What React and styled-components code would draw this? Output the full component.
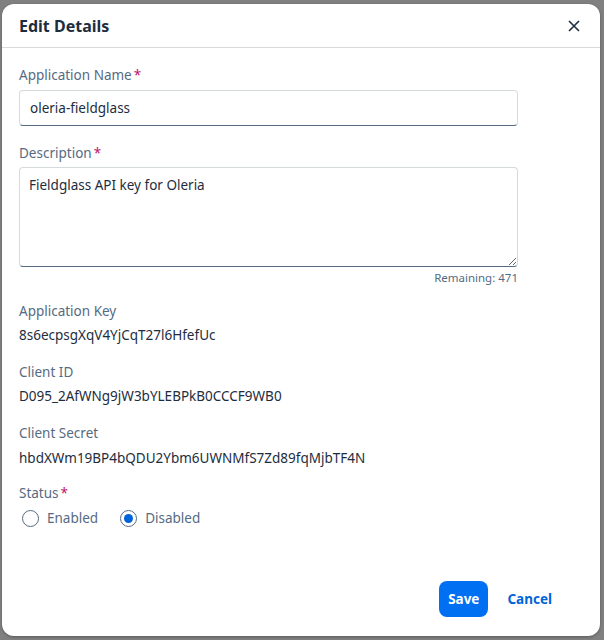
import styled, { createGlobalStyle } from "styled-components";
import { useState } from "react";

const Global = createGlobalStyle`
  html, body {
    margin: 0;
    padding: 0;
    background: #808080;
  }
  body {
    font-family: "Noto Sans", "Open Sans", Arial, sans-serif;
    padding: 4px 4px 4px 2px;
  }
  * { box-sizing: border-box; }
`;

const Dialog = styled.div`
  width: 598px;
  height: 632px;
  background: #fff;
  border-radius: 12px;
  display: flex;
  flex-direction: column;
  box-shadow: 0 1px 3px rgba(0, 0, 0, 0.3);
`;

const Header = styled.div`
  height: 44px;
  display: flex;
  align-items: center;
  justify-content: space-between;
  padding: 0 16px 0 17px;
  border-bottom: 1px solid #d9d9d9;
`;

const Title = styled.h1`
  margin: 0;
  font-size: 16px;
  font-weight: 700;
  color: #1d2d3e;
`;

const CloseButton = styled.button`
  border: none;
  background: none;
  padding: 0;
  width: 20px;
  height: 20px;
  display: flex;
  align-items: center;
  justify-content: center;
  cursor: pointer;
`;

const Body = styled.div`
  flex: 1;
  padding: 18px 17px 0;
  display: flex;
  flex-direction: column;
`;

const Label = styled.label`
  display: block;
  font-size: 13.5px;
  line-height: 18px;
  color: #556b82;
  margin-top: ${(p) => p.$top || 0}px;
`;

const Star = styled.span`
  color: #c0116d;
  margin-left: 2px;
`;

const Input = styled.input`
  display: block;
  width: 499px;
  height: 36px;
  margin-top: 6px;
  padding: 0 10px;
  font: inherit;
  font-size: 13.5px;
  color: #1d2d3e;
  border: 1px solid #d5dadd;
  border-bottom-color: #556b82;
  border-radius: 4px;
  outline: none;
`;

const TextArea = styled.textarea`
  display: block;
  width: 499px;
  height: 100px;
  margin-top: 5px;
  padding: 8px 9px;
  font: inherit;
  font-size: 13.5px;
  line-height: 18px;
  color: #1d2d3e;
  border: 1px solid #d5dadd;
  border-bottom-color: #556b82;
  border-radius: 4px;
  outline: none;
  resize: vertical;
`;

const Remaining = styled.div`
  width: 499px;
  text-align: right;
  font-size: 11.5px;
  line-height: 14px;
  margin-top: 4px;
  color: #556b82;
`;

const Value = styled.div`
  font-size: 13.5px;
  line-height: 18px;
  color: #1d2d3e;
  margin-top: ${(p) => p.$top || 6}px;
`;

const RadioRow = styled.div`
  display: flex;
  gap: 22px;
  margin-top: 7px;
  padding-left: 3px;
`;

const RadioLabel = styled.label`
  display: flex;
  align-items: center;
  gap: 8px;
  font-size: 13.5px;
  color: #556b82;
  cursor: pointer;
`;

const Circle = styled.span`
  width: 17px;
  height: 17px;
  border-radius: 50%;
  border: 1px solid #556b82;
  display: flex;
  align-items: center;
  justify-content: center;
  &::after {
    content: "";
    width: 9px;
    height: 9px;
    border-radius: 50%;
    background: ${(p) => (p.$on ? "#0064d9" : "transparent")};
  }
`;

const Footer = styled.div`
  display: flex;
  justify-content: flex-end;
  align-items: center;
  gap: 17px;
  padding: 0 46px 19px 0;
`;

const Button = styled.button`
  height: 36px;
  padding: 0 ${(p) => (p.$primary ? 9 : 2)}px;
  border: none;
  border-radius: 8px;
  font: inherit;
  font-size: 13.5px;
  font-weight: 700;
  background: ${(p) => (p.$primary ? "#0070f2" : "transparent")};
  color: ${(p) => (p.$primary ? "#fff" : "#0064d9")};
  cursor: pointer;
`;

export default function App() {
  const [status, setStatus] = useState("disabled");

  return (
    <>
      <Global />
      <Dialog>
        <Header>
          <Title>Edit Details</Title>
          <CloseButton>
            <svg width="12" height="12" viewBox="0 0 12 12">
              <path d="M1 1L11 11M11 1L1 11" stroke="#1d2d3e" strokeWidth="1.6" />
            </svg>
          </CloseButton>
        </Header>
        <Body>
          <Label>
            Application Name<Star>*</Star>
          </Label>
          <Input defaultValue="oleria-fieldglass" />

          <Label $top={18}>
            Description<Star>*</Star>
          </Label>
          <TextArea defaultValue="Fieldglass API key for Oleria" />
          <Remaining>Remaining: 471</Remaining>

          <Label $top={17}>Application Key</Label>
          <Value>8s6ecpsgXqV4YjCqT27l6HfefUc</Value>

          <Label $top={19}>Client ID</Label>
          <Value>D095_2AfWNg9jW3bYLEBPkB0CCCF9WB0</Value>

          <Label $top={19}>Client Secret</Label>
          <Value $top={7}>hbdXWm19BP4bQDU2Ybm6UWNMfS7Zd89fqMjbTF4N</Value>

          <Label $top={17}>
            Status<Star>*</Star>
          </Label>
          <RadioRow>
            <RadioLabel onClick={() => setStatus("enabled")}>
              <Circle $on={status === "enabled"} />
              Enabled
            </RadioLabel>
            <RadioLabel onClick={() => setStatus("disabled")}>
              <Circle $on={status === "disabled"} />
              Disabled
            </RadioLabel>
          </RadioRow>
        </Body>
        <Footer>
          <Button $primary>Save</Button>
          <Button>Cancel</Button>
        </Footer>
      </Dialog>
    </>
  );
}
